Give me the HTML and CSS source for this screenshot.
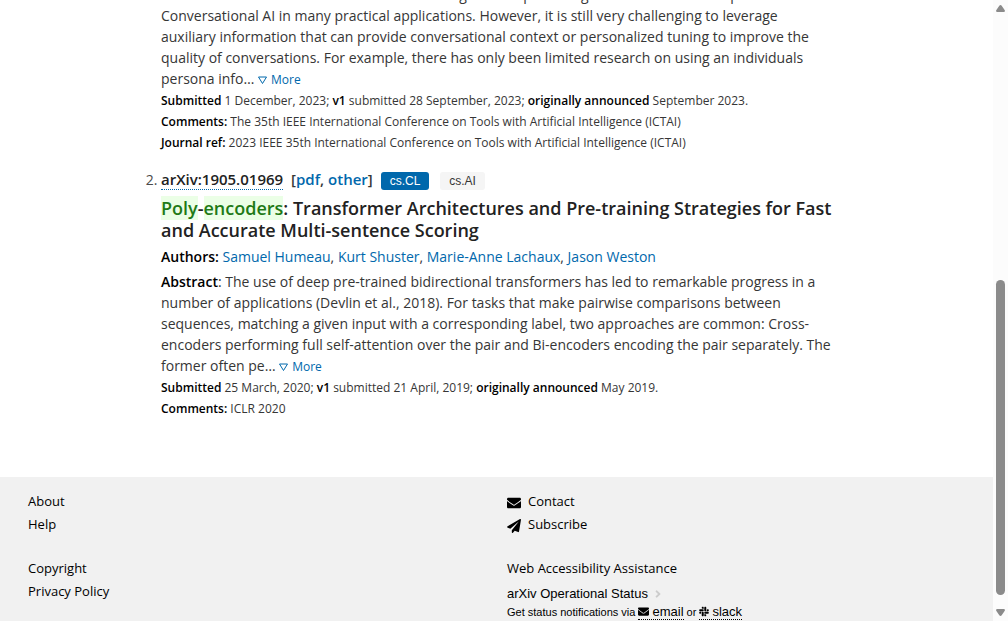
FILE: index.html
```html
<!DOCTYPE html>
<html lang="en">
<head>
<meta charset="utf-8">
<title>Search | arXiv e-print repository</title>
<link rel="stylesheet" href="styles.css">
</head>
<body>
<div class="page">
  <main class="content">
    <ol class="results">
      <li class="result result-first">
        <p class="abstract"><strong>Abstract</strong>: Recent advances in machine learning and deep learning have led to the widespread use of Conversational AI in many practical applications. However, it is still very challenging to leverage auxiliary information that can provide conversational context or personalized tuning to improve the quality of conversations. For example, there has only been limited research on using an individuals persona info… <a class="more" href="#"><svg class="tri" viewBox="0 0 9 8"><path d="M.5 1h8L4.500 7.500z"/></svg>More</a></p>
        <p class="detail"><strong>Submitted</strong> 1 December, 2023; <strong>v1</strong> submitted 28 September, 2023; <strong>originally announced</strong> September 2023.</p>
        <p class="detail"><strong>Comments:</strong> The 35th IEEE International Conference on Tools with Artificial Intelligence (ICTAI)</p>
        <p class="detail"><strong>Journal ref:</strong> 2023 IEEE 35th International Conference on Tools with Artificial Intelligence (ICTAI)</p>
      </li>
      <li class="result">
        <div class="head">
          <a class="ident" href="#">arXiv:1905.01969</a>
          <span class="formats">[<a href="#">pdf</a>, <a href="#">other</a>]</span>
          <span class="tag tag-primary">cs.CL</span>
          <span class="tag">cs.AI</span>
        </div>
        <p class="title"><mark>Poly</mark>-<mark>encoders</mark>: Transformer Architectures and Pre-training Strategies for Fast and Accurate Multi-sentence Scoring</p>
        <p class="authors"><strong>Authors:</strong> <a href="#">Samuel Humeau</a>, <a href="#">Kurt Shuster</a>, <a href="#">Marie-Anne Lachaux</a>, <a href="#">Jason Weston</a></p>
        <p class="abstract"><strong>Abstract</strong>: The use of deep pre-trained bidirectional transformers has led to remarkable progress in a number of applications (Devlin et al., 2018). For tasks that make pairwise comparisons between sequences, matching a given input with a corresponding label, two approaches are common: Cross-encoders performing full self-attention over the pair and Bi-encoders encoding the pair separately. The former often pe… <a class="more" href="#"><svg class="tri" viewBox="0 0 9 8"><path d="M.5 1h8L4.500 7.500z"/></svg>More</a></p>
        <p class="detail"><strong>Submitted</strong> 25 March, 2020; <strong>v1</strong> submitted 21 April, 2019; <strong>originally announced</strong> May 2019.</p>
        <p class="detail"><strong>Comments:</strong> ICLR 2020</p>
      </li>
    </ol>
  </main>
  <footer class="footer">
    <ul class="links">
      <li><a href="#">About</a></li>
      <li><a href="#">Help</a></li>
    </ul>
    <ul class="links">
      <li><svg class="icon" viewBox="0 0 512 512"><path d="M502.300 190.800c3.900-3.100 9.700-.2 9.700 4.700V400c0 26.500-21.500 48-48 48H48c-26.500 0-48-21.500-48-48V195.600c0-5 5.700-7.800 9.700-4.700 22.400 17.400 52.100 39.500 154.100 113.600 21.100 15.400 56.700 47.800 92.200 47.600 35.700.3 72-32.800 92.300-47.600 102-74.100 131.600-96.300 154-113.700zM256 320c23.200.4 56.600-29.200 73.400-41.400 132.700-96.300 142.800-104.700 173.400-128.700 5.800-4.500 9.200-11.500 9.200-18.900v-19c0-26.500-21.500-48-48-48H48c-26.500 0-48 21.500-48 48v19c0 7.400 3.400 14.300 9.200 18.900 30.600 23.900 40.700 32.400 173.400 128.700 16.800 12.200 50.200 41.800 73.400 41.400z"/></svg><a href="#">Contact</a></li>
      <li><svg class="icon" viewBox="0 0 512 512"><path d="M476 3.200L12.500 270.600c-18.100 10.400-15.800 35.600 2.200 43.200L121 358.400l287.300-253.200c5.500-4.900 13.300 2.600 8.600 8.300L176 407v80.500c0 23.600 28.500 32.900 42.500 15.800L282 426l124.600 52.200c14.200 6 30.400-2.900 33-18.200l72-432C515 7.800 493.300-6.800 476 3.200z"/></svg><a href="#">Subscribe</a></li>
    </ul>
    <ul class="links">
      <li><a href="#">Copyright</a></li>
      <li><a href="#">Privacy Policy</a></li>
    </ul>
    <div class="help">
      <a class="assist" href="#">Web Accessibility Assistance</a>
      <a class="status" href="#">arXiv Operational Status <svg class="chevron" viewBox="0 0 256 512"><path d="M224.300 273l-136 136c-9.400 9.400-24.600 9.400-33.900 0l-22.600-22.600c-9.400-9.400-9.400-24.600 0-33.900l96.400-96.400-96.400-96.400c-9.400-9.400-9.400-24.600 0-33.900L54.300 103c9.400-9.400 24.600-9.400 33.900 0l136 136c9.500 9.400 9.500 24.600.1 34z"/></svg></a>
      <p class="notify">Get status notifications via <a href="#"><svg class="small-icon" viewBox="0 0 512 512"><path d="M502.300 190.800c3.900-3.100 9.700-.2 9.700 4.700V400c0 26.500-21.500 48-48 48H48c-26.500 0-48-21.500-48-48V195.600c0-5 5.700-7.800 9.700-4.700 22.400 17.400 52.100 39.500 154.100 113.600 21.100 15.400 56.700 47.800 92.200 47.600 35.700.3 72-32.800 92.300-47.600 102-74.100 131.600-96.300 154-113.700zM256 320c23.200.4 56.600-29.200 73.400-41.400 132.700-96.300 142.800-104.700 173.400-128.700 5.800-4.500 9.200-11.500 9.200-18.900v-19c0-26.500-21.500-48-48-48H48c-26.500 0-48 21.500-48 48v19c0 7.400 3.400 14.300 9.200 18.900 30.600 23.900 40.700 32.400 173.400 128.700 16.800 12.200 50.200 41.800 73.400 41.400z"/></svg>email</a> or <a href="#"><svg class="small-icon slack" viewBox="0 0 448 512"><path d="M94.120 315.100c0 25.900-21.160 47.060-47.060 47.060S0 341 0 315.100c0-25.900 21.160-47.060 47.060-47.060h47.060v47.060zm23.720 0c0-25.900 21.160-47.060 47.060-47.060s47.060 21.160 47.060 47.060v117.840c0 25.900-21.160 47.060-47.060 47.060s-47.060-21.160-47.060-47.060V315.100zm47.060-188.980c-25.900 0-47.060-21.160-47.060-47.060S139 32 164.900 32s47.060 21.160 47.060 47.060v47.060H164.900zm0 23.720c25.900 0 47.060 21.160 47.060 47.060s-21.160 47.060-47.060 47.060H47.060C21.160 243.960 0 222.800 0 196.900s21.160-47.060 47.060-47.060H164.900zm188.980 47.060c0-25.900 21.160-47.060 47.060-47.060 25.900 0 47.060 21.160 47.060 47.060s-21.160 47.060-47.060 47.060h-47.060V196.900zm-23.720 0c0 25.900-21.160 47.060-47.060 47.060-25.900 0-47.060-21.160-47.060-47.060V79.060c0-25.900 21.160-47.060 47.060-47.060 25.900 0 47.060 21.160 47.060 47.060V196.900zM283.100 385.880c25.900 0 47.060 21.160 47.060 47.060 0 25.900-21.160 47.060-47.060 47.060-25.900 0-47.060-21.160-47.060-47.060v-47.060h47.060zm0-23.720c-25.900 0-47.060-21.160-47.060-47.060 0-25.900 21.160-47.060 47.060-47.060h117.840c25.900 0 47.060 21.160 47.060 47.060 0 25.900-21.160 47.060-47.060 47.060H283.100z"/></svg>slack</a></p>
    </div>
  </footer>
</div>
<div class="scrollbar" aria-hidden="true">
  <svg class="arrow" viewBox="0 0 9 7"><path d="M4.500 0Q5.200 0 5.700 .8L8.800 5.300Q9.300 7 7.800 7H1.200Q-.3 7 .2 5.300L3.300 .8Q3.800 0 4.500 0z"/></svg>
  <div class="track"><div class="thumb"></div></div>
  <svg class="arrow" viewBox="0 0 9 7"><path d="M4.500 7Q5.200 7 5.700 6.200L8.800 1.700Q9.300 0 7.800 0H1.200Q-.3 0 .2 1.700L3.300 6.200Q3.800 7 4.500 7z"/></svg>
</div>
</body>
</html>
```

FILE: styles.css
```css
* {
  box-sizing: border-box;
}

body {
  margin: 0;
  height: 100vh;
  display: flex;
  overflow: hidden;
  background: #fff;
  color: #363636;
  font: 14px/21px "Open Sans", sans-serif;
}

p, ol, ul {
  margin: 0;
  padding: 0;
}

a {
  color: #0068ac;
  text-decoration: none;
}

strong {
  color: #000;
  font-weight: 600;
}

.page {
  flex: 1;
  min-width: 0;
  display: flex;
  flex-direction: column;
}

.content {
  flex: none;
  padding: 0 161px 58px;
  margin-top: -16px;
}

.result::marker {
  color: #4a4a4a;
}

.result-first {
  list-style: none;
  margin-bottom: 16px;
}

.more {
  font-size: 12px;
}

.tri {
  width: 9px;
  height: 8px;
  margin-right: 4px;
  fill: none;
  stroke: #0068ac;
}

.detail {
  font-size: 12px;
}

.head {
  margin-bottom: 7px;
  font-size: 15px;
  font-weight: 550;
}

.ident {
  color: #222;
  border-bottom: 1px dotted #0068ac;
}

.formats {
  margin: 0 4px;
}

.tag {
  display: inline-block;
  padding: 0 9px;
  margin-right: 7px;
  border-radius: 3px;
  background: #f5f5f5;
  color: #363636;
  font: 12px/18px "Liberation Sans", sans-serif;
}

.tag-primary {
  background: #0068ac;
  color: #fff;
}

.title {
  margin-bottom: 5px;
  color: #222;
  font-size: 18px;
  line-height: 22px;
  font-weight: 550;
}

.title mark {
  background: #ebffe6;
  color: #1f7a16;
}

.authors {
  margin-bottom: 4px;
}

.footer {
  flex: 1 0 auto;
  display: grid;
  grid-template-columns: 1fr 1fr;
  grid-template-rows: auto auto;
  align-content: start;
  gap: 21px 0;
  padding: 13px 7px 0 28px;
  background: #f1f1f1;
  color: #000;
  font-size: 13px;
  line-height: 23px;
}

.footer a {
  color: #000;
}

.links {
  list-style: none;
}

.icon {
  width: 14px;
  height: 14px;
  margin-right: 7px;
  vertical-align: -4px;
}

.help {
  display: flex;
  flex-direction: column;
  align-items: start;
}

.status {
  margin-top: 4px;
  font: 13px/20px "Liberation Sans", sans-serif;
}

.chevron {
  width: 6px;
  height: 12px;
  margin-left: 3px;
  vertical-align: -2px;
  fill: #ccc;
}

.notify {
  font: 11px/16px "Liberation Sans", sans-serif;
}

.notify a {
  font-size: 13px;
  border-bottom: 1px dotted #000;
}

.small-icon {
  width: 11px;
  height: 11px;
  margin-right: 3px;
  vertical-align: -1px;
}

.slack {
  width: 10px;
}

.scrollbar {
  flex: none;
  width: 15px;
  display: flex;
  flex-direction: column;
  align-items: center;
  padding: 5px 0;
  background: #fcfcfc;
}

.arrow {
  width: 9px;
  height: 7px;
  fill: #8b8b8b;
}

.track {
  flex: 1;
  width: 9px;
  padding: 0 0 14px;
  display: flex;
  flex-direction: column;
  justify-content: flex-end;
}

.thumb {
  height: 54%;
  border-radius: 5px;
  background: #8b8b8b;
}
```
